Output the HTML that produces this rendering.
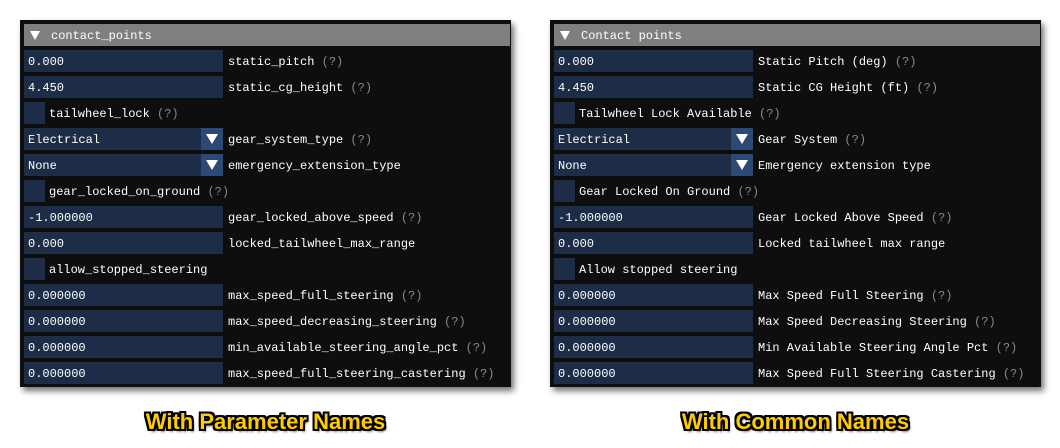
<!DOCTYPE html>
<html><head><style>
body{margin:0;width:1060px;height:448px;background:#fff;position:relative;overflow:hidden;font-family:"Liberation Mono",monospace;}
.panel{position:absolute;top:20px;width:491px;height:367px;background:#0e0e0e;box-shadow:3px 4px 6px rgba(0,0,0,.55);}
.hdr{position:absolute;left:4px;top:4px;width:486px;height:22px;background:#7f7f7f;color:#fff;font-size:12px;line-height:25px;}
.hdr span{position:absolute;left:27px;}
.tri{position:absolute;left:6px;top:7px;width:0;height:0;border-left:5px solid transparent;border-right:5px solid transparent;border-top:9px solid #fff;}
.row{position:absolute;left:4px;height:22px;width:486px;color:#fff;font-size:12px;line-height:25px;}
.f{position:absolute;left:0;top:0;width:199px;height:22px;background:#1e2d47;}
.f span{position:absolute;left:4px;}
.cb{position:absolute;left:0;top:0;width:21px;height:22px;background:#1e2d47;}
.ar{position:absolute;left:177px;top:0;width:22px;height:22px;background:#2a4a74;}
.ar:after{content:"";position:absolute;left:5px;top:6px;border-left:6px solid transparent;border-right:6px solid transparent;border-top:10px solid #fff;}
.l{position:absolute;left:204px;}
.l2{position:absolute;left:25px;}
.q{color:#8a8a8a;}
.cap{position:absolute;top:409px;width:491px;text-align:center;font-family:"Liberation Sans",sans-serif;font-weight:bold;font-size:22px;color:#ffcc00;
text-shadow:-2px -2px 0 #000,2px -2px 0 #000,-2px 2px 0 #000,2px 2px 0 #000,0 2px 0 #000,0 -2px 0 #000,2px 0 0 #000,-2px 0 0 #000,2px 3px 2px rgba(0,0,0,.5);}
</style></head><body>

<div class="panel" style="left:20px">
<div class="hdr"><div class="tri"></div><span>contact_points</span></div>
<div class="row" style="top:30px"><div class="f"><span>0.000</span></div><span class="l">static_pitch <span class="q">(?)</span></span></div>
<div class="row" style="top:56px"><div class="f"><span>4.450</span></div><span class="l">static_cg_height <span class="q">(?)</span></span></div>
<div class="row" style="top:82px"><div class="cb"></div><span class="l2">tailwheel_lock <span class="q">(?)</span></span></div>
<div class="row" style="top:108px"><div class="f"><span>Electrical</span><div class="ar"></div></div><span class="l">gear_system_type <span class="q">(?)</span></span></div>
<div class="row" style="top:134px"><div class="f"><span>None</span><div class="ar"></div></div><span class="l">emergency_extension_type</span></div>
<div class="row" style="top:160px"><div class="cb"></div><span class="l2">gear_locked_on_ground <span class="q">(?)</span></span></div>
<div class="row" style="top:186px"><div class="f"><span>-1.000000</span></div><span class="l">gear_locked_above_speed <span class="q">(?)</span></span></div>
<div class="row" style="top:212px"><div class="f"><span>0.000</span></div><span class="l">locked_tailwheel_max_range</span></div>
<div class="row" style="top:238px"><div class="cb"></div><span class="l2">allow_stopped_steering</span></div>
<div class="row" style="top:264px"><div class="f"><span>0.000000</span></div><span class="l">max_speed_full_steering <span class="q">(?)</span></span></div>
<div class="row" style="top:290px"><div class="f"><span>0.000000</span></div><span class="l">max_speed_decreasing_steering <span class="q">(?)</span></span></div>
<div class="row" style="top:316px"><div class="f"><span>0.000000</span></div><span class="l">min_available_steering_angle_pct <span class="q">(?)</span></span></div>
<div class="row" style="top:342px"><div class="f"><span>0.000000</span></div><span class="l">max_speed_full_steering_castering <span class="q">(?)</span></span></div>
</div>

<div class="panel" style="left:550px">
<div class="hdr"><div class="tri"></div><span>Contact points</span></div>
<div class="row" style="top:30px"><div class="f"><span>0.000</span></div><span class="l">Static Pitch (deg) <span class="q">(?)</span></span></div>
<div class="row" style="top:56px"><div class="f"><span>4.450</span></div><span class="l">Static CG Height (ft) <span class="q">(?)</span></span></div>
<div class="row" style="top:82px"><div class="cb"></div><span class="l2">Tailwheel Lock Available <span class="q">(?)</span></span></div>
<div class="row" style="top:108px"><div class="f"><span>Electrical</span><div class="ar"></div></div><span class="l">Gear System <span class="q">(?)</span></span></div>
<div class="row" style="top:134px"><div class="f"><span>None</span><div class="ar"></div></div><span class="l">Emergency extension type</span></div>
<div class="row" style="top:160px"><div class="cb"></div><span class="l2">Gear Locked On Ground <span class="q">(?)</span></span></div>
<div class="row" style="top:186px"><div class="f"><span>-1.000000</span></div><span class="l">Gear Locked Above Speed <span class="q">(?)</span></span></div>
<div class="row" style="top:212px"><div class="f"><span>0.000</span></div><span class="l">Locked tailwheel max range</span></div>
<div class="row" style="top:238px"><div class="cb"></div><span class="l2">Allow stopped steering</span></div>
<div class="row" style="top:264px"><div class="f"><span>0.000000</span></div><span class="l">Max Speed Full Steering <span class="q">(?)</span></span></div>
<div class="row" style="top:290px"><div class="f"><span>0.000000</span></div><span class="l">Max Speed Decreasing Steering <span class="q">(?)</span></span></div>
<div class="row" style="top:316px"><div class="f"><span>0.000000</span></div><span class="l">Min Available Steering Angle Pct <span class="q">(?)</span></span></div>
<div class="row" style="top:342px"><div class="f"><span>0.000000</span></div><span class="l">Max Speed Full Steering Castering <span class="q">(?)</span></span></div>
</div>

<div class="cap" style="left:20px">With Parameter Names</div>
<div class="cap" style="left:550px">With Common Names</div>
</body></html>
